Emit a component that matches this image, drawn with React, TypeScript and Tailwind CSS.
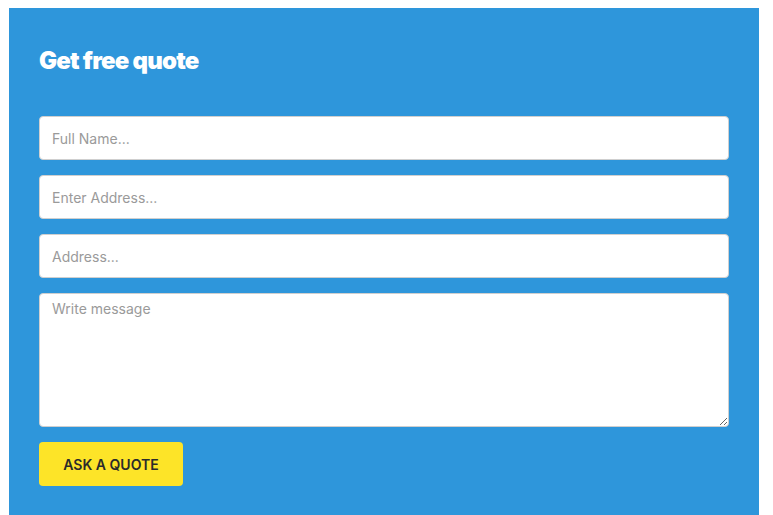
import React from 'react';

export default function App() {
  const fieldClass =
    'w-full h-[44px] rounded-[4px] border border-[#cfcfcf] bg-white px-3 text-[14px] text-[#555] placeholder:text-[#9a9a9a] outline-none';

  return (
    <div className="min-h-[515px] bg-white pt-[8px] pl-[9px]" style={{ fontFamily: 'Inter, "Noto Sans", sans-serif' }}>
      <div className="w-[750px] bg-[#2e96db] px-[30px] pt-[35px] pb-[30px]">
        <h2 className="text-[24px] leading-[36px] font-black tracking-[-0.8px] text-white">Get free quote</h2>

        <form className="mt-[37px] flex flex-col gap-[15px]" onSubmit={(e) => e.preventDefault()}>
          <input className={fieldClass} placeholder="Full Name..." />
          <input className={fieldClass} placeholder="Enter Address..." />
          <input className={fieldClass} placeholder="Address..." />
          <textarea
            className="w-full h-[134px] rounded-[4px] border border-[#cfcfcf] bg-white px-3 py-[4px] text-[14px] text-[#555] placeholder:text-[#9a9a9a] outline-none"
            placeholder="Write message"
          />
          <div>
            <button
              type="submit"
              className="h-[44px] w-[144px] rounded-[4px] bg-[#fde428] text-[14px] font-semibold uppercase text-[#2b2b2b]"
            >
              Ask a quote
            </button>
          </div>
        </form>
      </div>
    </div>
  );
}
